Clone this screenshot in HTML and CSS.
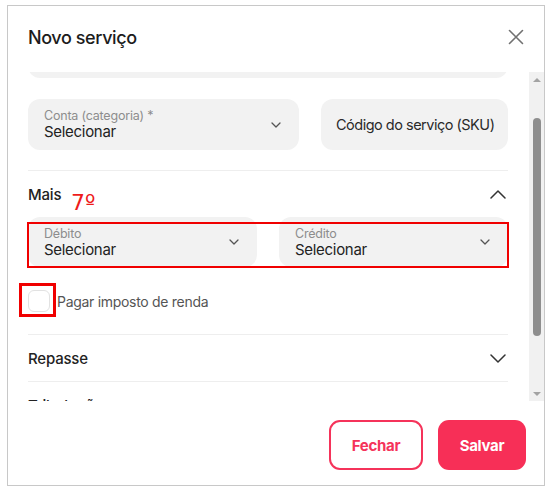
FILE: index.html
```html
<!DOCTYPE html>
<html lang="pt-BR">
<head>
<meta charset="utf-8">
<title>Novo serviço</title>
<link rel="stylesheet" href="styles.css">
</head>
<body>
<div class="modal">
  <header class="modal-header">
    <h1 class="modal-title">Novo serviço</h1>
    <button class="close-btn" aria-label="Fechar">
      <svg width="16" height="16" viewBox="0 0 16 16"><path d="M1.5 1.5 L14.5 14.5 M14.5 1.5 L1.5 14.5" stroke="#717171" stroke-width="1.6" fill="none" stroke-linecap="round"/></svg>
    </button>
  </header>

  <div class="modal-body">
    <div class="viewport">
      <div class="content">
        <div class="field field-partial"></div>

        <div class="row row-conta">
          <div class="field select">
            <div class="field-text">
              <span class="field-label">Conta (categoria) *</span>
              <span class="field-value">Selecionar</span>
            </div>
            <svg class="chev-sm" width="10" height="6" viewBox="0 0 10 6"><path d="M1 1 L5 5 L9 1" stroke="#555" stroke-width="1.3" fill="none" stroke-linecap="round" stroke-linejoin="round"/></svg>
          </div>
          <div class="field input">
            <span class="placeholder">Código do serviço (SKU)</span>
          </div>
        </div>

        <section class="section section-mais">
          <div class="section-head">
            <span class="section-title">Mais</span>
            <span class="annot-num">7º</span>
            <svg class="chev-lg" width="16" height="9" viewBox="0 0 16 9"><path d="M1 8 L8 1 L15 8" stroke="#333" stroke-width="1.5" fill="none" stroke-linecap="round" stroke-linejoin="round"/></svg>
          </div>
          <div class="row row-dc">
            <div class="field select">
              <div class="field-text">
                <span class="field-label">Débito</span>
                <span class="field-value">Selecionar</span>
              </div>
              <svg class="chev-sm" width="10" height="6" viewBox="0 0 10 6"><path d="M1 1 L5 5 L9 1" stroke="#555" stroke-width="1.3" fill="none" stroke-linecap="round" stroke-linejoin="round"/></svg>
            </div>
            <div class="field select">
              <div class="field-text">
                <span class="field-label">Crédito</span>
                <span class="field-value">Selecionar</span>
              </div>
              <svg class="chev-sm" width="10" height="6" viewBox="0 0 10 6"><path d="M1 1 L5 5 L9 1" stroke="#555" stroke-width="1.3" fill="none" stroke-linecap="round" stroke-linejoin="round"/></svg>
            </div>
            <div class="annot-box"></div>
          </div>
          <label class="check-row">
            <span class="checkbox"><span class="annot-check"></span></span>
            <span class="check-label">Pagar imposto de renda</span>
          </label>
        </section>

        <section class="section">
          <div class="section-head">
            <span class="section-title">Repasse</span>
            <svg class="chev-lg" width="16" height="9" viewBox="0 0 16 9"><path d="M1 1 L8 8 L15 1" stroke="#333" stroke-width="1.5" fill="none" stroke-linecap="round" stroke-linejoin="round"/></svg>
          </div>
        </section>

        <section class="section">
          <div class="section-head">
            <span class="section-title">Tributação</span>
            <svg class="chev-lg" width="16" height="9" viewBox="0 0 16 9"><path d="M1 1 L8 8 L15 1" stroke="#333" stroke-width="1.5" fill="none" stroke-linecap="round" stroke-linejoin="round"/></svg>
          </div>
        </section>
      </div>
    </div>
    <div class="scrollbar">
      <span class="sb-arrow up"></span>
      <div class="sb-track"><span class="sb-thumb"></span></div>
      <span class="sb-arrow down"></span>
    </div>
  </div>

  <footer class="modal-footer">
    <button class="btn btn-outline">Fechar</button>
    <button class="btn btn-primary">Salvar</button>
  </footer>
</div>
</body>
</html>
```

FILE: styles.css
```css
* { box-sizing: border-box; }

html, body {
  margin: 0;
  padding: 0;
  background: #ffffff;
}

body {
  font-family: "Inter", "Noto Sans", sans-serif;
  color: #222;
}

.modal {
  margin: 5px 0 0 7px;
  width: 538px;
  height: 481px;
  border: 1px solid #c8c8c8;
  display: flex;
  flex-direction: column;
  background: #fff;
}

.modal-header {
  height: 66px;
  padding: 0 20px 4px 20px;
  display: flex;
  align-items: center;
  justify-content: space-between;
  flex: none;
}

.modal-title {
  margin: 0;
  font-size: 18px;
  font-weight: 500;
  letter-spacing: -0.4px;
  color: #1c1c1c;
}

.close-btn {
  border: 0;
  background: none;
  padding: 0;
  width: 16px;
  height: 16px;
  display: flex;
}

.modal-body {
  flex: none;
  height: 329px;
  display: flex;
}

.viewport {
  flex: 1;
  overflow: hidden;
  padding: 0 21px 0 20px;
}

.content {
  margin-top: -44px;
  display: flex;
  flex-direction: column;
}

.field {
  background: #f2f2f2;
  border-radius: 12px;
  height: 51px;
  display: flex;
  align-items: center;
}

.field-partial {
  height: 50px;
}

.row {
  display: grid;
  gap: 22px;
}

.row-conta {
  margin-top: 21px;
  grid-template-columns: 271px 1fr;
}

.select {
  padding: 0 18px 0 16px;
  justify-content: space-between;
}

.field-text {
  display: flex;
  flex-direction: column;
}

.field-label {
  font-size: 12.5px;
  line-height: 15px;
  color: #8d8d8d;
  letter-spacing: -0.2px;
}

.field-value {
  font-size: 15px;
  line-height: 18px;
  color: #222;
  letter-spacing: -0.3px;
}

.input {
  padding-left: 15px;
}

.placeholder {
  font-size: 14.5px;
  color: #2a2a2a;
  letter-spacing: -0.5px;
}

.section {
  border-top: 1px solid #eeeeee;
}

.section-mais {
  margin-top: 20px;
  padding-bottom: 22px;
}

.section-head {
  position: relative;
  height: 46px;
  display: flex;
  align-items: center;
  justify-content: space-between;
  padding-right: 2px;
}

.section-title {
  font-size: 15px;
  font-weight: 500;
  color: #222;
  letter-spacing: -0.2px;
}

.annot-num {
  position: absolute;
  left: 43px;
  top: 20px;
  font-size: 22px;
  line-height: 24px;
  color: #ee1b1b;
  font-family: "DejaVu Sans", "Liberation Sans", sans-serif;
}

.row-dc {
  position: relative;
  grid-template-columns: 1fr 1fr;
}

.row-dc .field {
  height: 50px;
}

.annot-box {
  position: absolute;
  left: -1px;
  right: -1px;
  top: 5px;
  bottom: -1px;
  border: 2px solid #f00000;
  pointer-events: none;
}

.check-row {
  margin-top: 23px;
  display: flex;
  align-items: center;
  gap: 7px;
  height: 22px;
}

.checkbox {
  position: relative;
  width: 22px;
  height: 22px;
  border: 1px solid #e2e2e2;
  border-radius: 6px;
  background: #fff;
}

.annot-check {
  position: absolute;
  left: -10px;
  top: -8px;
  right: -7px;
  bottom: -6px;
  border: 3px solid #f00000;
}

.check-label {
  font-size: 14px;
  color: #555;
  letter-spacing: -0.3px;
}

.scrollbar {
  width: 15px;
  flex: none;
  background: #f1f1f1;
  display: flex;
  flex-direction: column;
  align-items: center;
}

.sb-arrow {
  height: 15px;
  width: 15px;
  display: flex;
  align-items: center;
  justify-content: center;
  flex: none;
}

.sb-arrow::before {
  content: "";
  width: 0;
  height: 0;
  border-left: 4px solid transparent;
  border-right: 4px solid transparent;
}

.sb-arrow.up::before {
  border-bottom: 4px solid #a3a3a3;
}

.sb-arrow.down::before {
  border-top: 4px solid #a3a3a3;
}

.sb-track {
  flex: 1;
  width: 100%;
  display: flex;
  justify-content: center;
  padding-top: 31px;
}

.sb-thumb {
  width: 8px;
  height: 218px;
  border-radius: 4px;
  background: #8e8e8e;
}

.modal-footer {
  flex: 1;
  display: flex;
  justify-content: flex-end;
  align-items: flex-start;
  gap: 15px;
  padding: 19px 18px 0 0;
}

.btn {
  height: 50px;
  border-radius: 11px;
  font-family: "Inter", sans-serif;
  font-size: 15px;
  font-weight: 700;
  letter-spacing: -0.3px;
  cursor: pointer;
}

.btn-outline {
  width: 94px;
  background: #fff;
  border: 2px solid #f5335a;
  color: #f5335a;
}

.btn-primary {
  width: 88px;
  background: #f72f57;
  border: 0;
  color: #fff;
}
```
